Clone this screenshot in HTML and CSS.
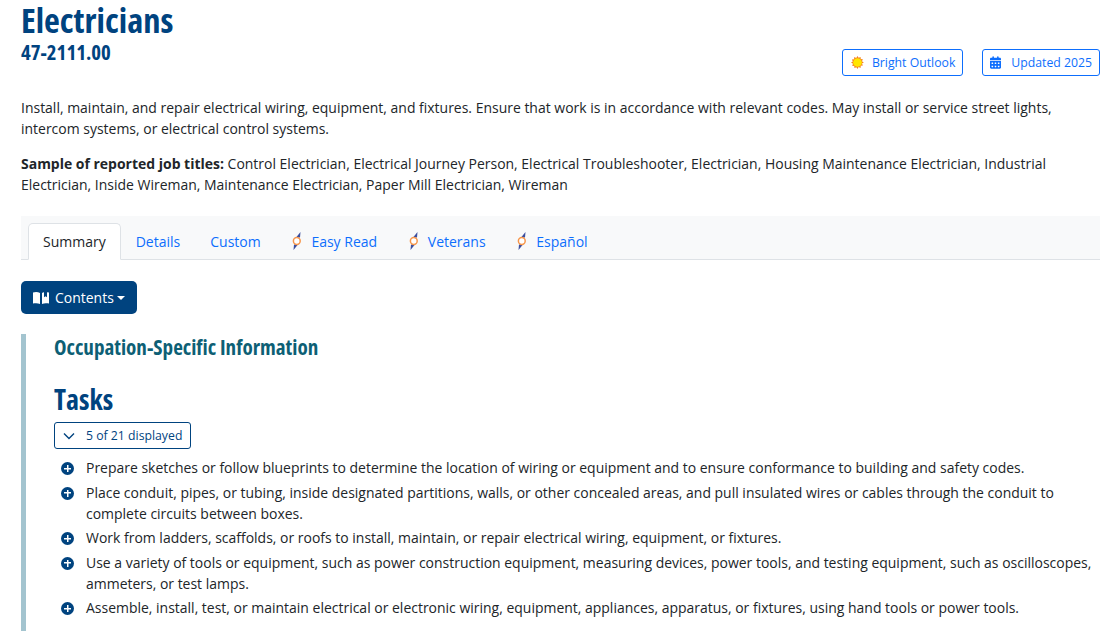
FILE: index.html
```html
<!DOCTYPE html>
<html lang="en">
<head>
<meta charset="utf-8">
<title>Electricians</title>
<link rel="stylesheet" href="styles.css">
</head>
<body>
<header class="head">
  <div class="names">
    <h1 class="title">Electricians</h1>
    <div class="code">47-2111.00</div>
  </div>
  <div class="badges">
    <a class="badge"><svg class="ic" viewBox="0 0 14 14"><path fill="#f58220" d="M7 0l1.200 2 2.100-1 .2 2.300 2.300.2-1 2.100 2 1.400-2 1.200 1 2.100-2.300.2-.2 2.300-2.100-1L7 14l-1.200-2-2.100 1-.2-2.300-2.300-.2 1-2.100L0 7l2-1.200-1-2.100 2.300-.2.2-2.300 2.100 1z"/><circle cx="7" cy="7" r="4.700" fill="#ffe600"/></svg>Bright Outlook</a>
    <a class="badge"><svg class="ic cal" viewBox="0 0 448 512"><path fill="#0d6efd" d="M128 0c18 0 32 14 32 32v32h128V32c0-18 14-32 32-32s32 14 32 32v32h48c26 0 48 22 48 48v48H0v-48c0-26 22-48 48-48h48V32c0-18 14-32 32-32zM0 192h448v272c0 26-22 48-48 48H48c-26 0-48-22-48-48V192zm64 80v32c0 9 7 16 16 16h32c9 0 16-7 16-16v-32c0-9-7-16-16-16H80c-9 0-16 7-16 16zm128 0v32c0 9 7 16 16 16h32c9 0 16-7 16-16v-32c0-9-7-16-16-16h-32c-9 0-16 7-16 16zm144-16c-9 0-16 7-16 16v32c0 9 7 16 16 16h32c9 0 16-7 16-16v-32c0-9-7-16-16-16h-32zM64 400v32c0 9 7 16 16 16h32c9 0 16-7 16-16v-32c0-9-7-16-16-16H80c-9 0-16 7-16 16zm144-16c-9 0-16 7-16 16v32c0 9 7 16 16 16h32c9 0 16-7 16-16v-32c0-9-7-16-16-16h-32zm112 16v32c0 9 7 16 16 16h32c9 0 16-7 16-16v-32c0-9-7-16-16-16h-32c-9 0-16 7-16 16z"/></svg>Updated 2025</a>
  </div>
</header>

<p class="para desc">Install, maintain, and repair electrical wiring, equipment, and fixtures. Ensure that work is in accordance with relevant codes. May install or service street lights, intercom systems, or electrical control systems.</p>
<p class="para titles"><b>Sample of reported job titles:</b> Control Electrician, Electrical Journey Person, Electrical Troubleshooter, Electrician, Housing Maintenance Electrician, Industrial Electrician, Inside Wireman, Maintenance Electrician, Paper Mill Electrician, Wireman</p>

<nav class="tabs">
  <a class="tab active">Summary</a>
  <a class="tab">Details</a>
  <a class="tab">Custom</a>
  <a class="tab"><svg class="plug" viewBox="0 0 12 18"><path fill="#3b4f9f" d="M9.500 0L9 5.500H5zM2.500 18L3 12.500h4z"/><circle cx="5.800" cy="9" r="3.400" fill="#fff" stroke="#f7964a" stroke-width="1.500"/></svg>Easy Read</a>
  <a class="tab"><svg class="plug" viewBox="0 0 12 18"><path fill="#3b4f9f" d="M9.500 0L9 5.500H5zM2.500 18L3 12.500h4z"/><circle cx="5.800" cy="9" r="3.400" fill="#fff" stroke="#f7964a" stroke-width="1.500"/></svg>Veterans</a>
  <a class="tab"><svg class="plug" viewBox="0 0 12 18"><path fill="#3b4f9f" d="M9.500 0L9 5.500H5zM2.500 18L3 12.500h4z"/><circle cx="5.800" cy="9" r="3.400" fill="#fff" stroke="#f7964a" stroke-width="1.500"/></svg>Español</a>
</nav>

<button class="contents"><svg class="book" viewBox="0 0 16 12"><path fill="#fff" d="M0 .6c2-.8 5-.8 7 .4v11c-2-1-5-1-7-.4zM9 1c.6-.4 1.300-.6 2-.8v5l1.500-1 1.500 1V.2l2 .4v11c-2-.6-5-.6-7 .4z"/></svg>Contents<span class="caret"></span></button>

<main class="section">
  <h2 class="occ">Occupation-Specific Information</h2>
  <h3 class="tasks">Tasks</h3>
  <button class="count"><svg class="chev" viewBox="0 0 12 8"><path fill="none" stroke="#00437f" stroke-width="1.400" d="M1 1.500l5 5 5-5"/></svg>5 of 21 displayed</button>
  <ul class="list">
    <li class="item">Prepare sketches or follow blueprints to determine the location of wiring or equipment and to ensure conformance to building and safety codes.</li>
    <li class="item">Place conduit, pipes, or tubing, inside designated partitions, walls, or other concealed areas, and pull insulated wires or cables through the conduit to complete circuits between boxes.</li>
    <li class="item">Work from ladders, scaffolds, or roofs to install, maintain, or repair electrical wiring, equipment, or fixtures.</li>
    <li class="item">Use a variety of tools or equipment, such as power construction equipment, measuring devices, power tools, and testing equipment, such as oscilloscopes, ammeters, or test lamps.</li>
    <li class="item">Assemble, install, test, or maintain electrical or electronic wiring, equipment, appliances, apparatus, or fixtures, using hand tools or power tools.</li>
  </ul>
</main>
```

FILE: styles.css
```css
* { box-sizing: border-box; }
html, body { height: 100%; overflow: hidden; }
body {
  margin: 0;
  padding: 0 13px 0 21px;
  font-family: "Open Sans", "Noto Sans", sans-serif;
  font-size: 13.98px;
  line-height: 21px;
  color: #212529;
  background: #fff;
}
.head { display: flex; justify-content: space-between; align-items: flex-end; height: 76px; }
.names { align-self: flex-start; }
.title {
  margin: 0;
  font-size: 34.5px;
  line-height: 40px;
  font-weight: 700;
  font-stretch: 75%;
  color: #00437f;
}
.code {
  font-size: 20.8px;
  line-height: 24px;
  font-weight: 700;
  font-stretch: 75%;
  color: #00437f;
}
.badges { display: flex; gap: 19px; }
.badge {
  display: flex;
  align-items: center;
  height: 27px;
  padding: 0 7px 1px 8px;
  border: 1px solid #0d6efd;
  border-radius: 3px;
  color: #0d6efd;
  font-size: 12.25px;
}
.ic { width: 13px; height: 13px; margin-right: 8px; }
.cal { width: 11px; margin-left: -1px; margin-right: 10px; }
.para { margin: 0; }
.desc { margin-top: 21px; }
.titles { margin-top: 14px; }
.tabs {
  display: flex;
  align-items: flex-end;
  height: 44px;
  margin-top: 21px;
  padding-left: 7px;
  background: #f8f9fa;
  border-bottom: 1px solid #dee2e6;
}
.tab {
  display: flex;
  align-items: center;
  height: 37px;
  margin-bottom: -1px;
  padding: 0 14px;
  font-size: 14px;
  color: #0d6efd;
  border: 1px solid transparent;
}
.active {
  background: #fff;
  color: #212529;
  border-color: #dee2e6 #dee2e6 #fff;
  border-radius: 5px 5px 0 0;
}
.plug { width: 12px; height: 18px; margin: -1px 8px 0 0.7px; }
.contents {
  display: flex;
  align-items: center;
  height: 33px;
  margin-top: 21px;
  padding: 0 12px;
  background: #00437f;
  color: #fff;
  border: 0;
  border-radius: 5px;
  font: inherit;
}
.book { width: 16px; height: 12px; margin-right: 6px; }
.caret {
  width: 0;
  height: 0;
  margin-left: 3px;
  border-top: 4px solid #fff;
  border-left: 4px solid transparent;
  border-right: 4px solid transparent;
}
.section {
  margin-top: 21px;
  padding-left: 28px;
  border-left: 5px solid #a3c4cf;
  height: 400px;
}
.occ {
  margin: -1px 0 0;
  font-size: 21.1px;
  line-height: 26px;
  font-weight: 700;
  font-stretch: 75%;
  color: #0d5f75;
}
.tasks {
  margin: 22px 0 0;
  font-size: 28px;
  line-height: 34px;
  font-weight: 700;
  font-stretch: 75%;
  color: #00437f;
}
.count {
  display: flex;
  align-items: center;
  height: 27px;
  margin-top: 6px;
  padding: 0 8px 0 7px;
  background: #fff;
  border: 1px solid #00437f;
  border-radius: 3px;
  color: #00437f;
  font: inherit;
  font-size: 12.25px;
}
.chev { width: 12px; height: 8px; margin-left: 1px; margin-right: 11px; }
.list { list-style: none; margin: 8px 0 0; padding: 0 0 0 32px; }
.item { position: relative; margin-bottom: 3.5px; }
.item::before {
  content: "";
  position: absolute;
  left: -25px;
  top: 5px;
  width: 13px;
  height: 13px;
  border-radius: 50%;
  background:
    linear-gradient(#fff, #fff) center / 7px 1.5px no-repeat,
    linear-gradient(#fff, #fff) center / 1.5px 7px no-repeat,
    #00437f;
}
```
